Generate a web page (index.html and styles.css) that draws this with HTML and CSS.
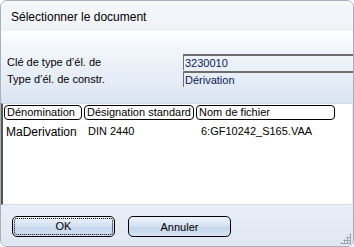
FILE: index.html
```html
<!DOCTYPE html>
<html lang="fr">
<head>
    <meta charset="UTF-8">
    <title>Sélectionner le document</title>
    <link rel="stylesheet" href="styles.css">
</head>
<body>
    <div class="window">
        <div class="title">Sélectionner le document</div>

        <div class="props">
            <div class="prop">
                <span class="label">Clé de type d’él. de</span>
                <span class="field">3230010</span>
            </div>
            <div class="prop">
                <span class="label">Type d’él. de constr.</span>
                <span class="field">Dérivation</span>
            </div>
        </div>

        <div class="list">
            <div class="head">
                <span class="col c1">Dénomination</span>
                <span class="col c2">Désignation standard</span>
                <span class="col c3">Nom de fichier</span>
            </div>
            <div class="row">
                <span class="c1">MaDerivation</span>
                <span class="c2">DIN 2440</span>
                <span class="c3">6:GF10242_S165.VAA</span>
            </div>
        </div>

        <div class="footer">
            <button class="btn ok"><span>OK</span></button>
            <button class="btn">Annuler</button>
            <div class="grip"></div>
        </div>
    </div>
</body>
</html>
```

FILE: styles.css
```css
body {
    margin: 0;
    background: #ffffff;
    font-family: 'Liberation Sans', Arial, sans-serif;
    font-size: 11px;
    color: #000;
}
.window {
    width: 352px;
    height: 245px;
    border: 1px solid #a7b0bb;
    border-radius: 7px;
    overflow: hidden;
    display: flex;
    flex-direction: column;
    background: #e4ebf5;
}
.title {
    height: 30px;
    line-height: 32px;
    padding-left: 10px;
    font-size: 12px;
    background: linear-gradient(#f6f8fb, #eef2f7);
    flex: none;
}
.props {
    height: 72px;
    flex: none;
    box-sizing: border-box;
    padding-top: 23px;
    background: linear-gradient(#ffffff 0%, #f4f7fb 20%, #dae5f3 100%);
}
.prop {
    display: flex;
    height: 16px;
    line-height: 16px;
    margin-bottom: 1px;
}
.label {
    width: 176px;
    padding-left: 6px;
    flex: none;
}
.field {
    flex: 1;
    border-top: 2px solid #6e6e6e;
    border-left: 1px solid #6e6e6e;
    padding-left: 1px;
    line-height: 15px;
    color: #0a1a5a;
}
.list {
    height: 102px;
    flex: none;
    box-sizing: border-box;
    background: #fff;
    border-top: 1px solid #d3dae3;
    border-left: 2px solid #555;
    border-bottom: 1px solid #d3dae3;
    margin-right: 1px;
}
.head {
    display: flex;
    padding: 1px 0 0 1px;
    gap: 2px;
}
.col {
    box-sizing: border-box;
    height: 15px;
    line-height: 13px;
    border: 1px solid #000;
    border-radius: 4px;
    padding-left: 2px;
    background: #fff;
}
.head .c1 { width: 78px; }
.head .c2 { width: 110px; }
.head .c3 { width: 139px; }
.row {
    display: flex;
    padding-top: 5px;
    font-size: 12px;
}
.row .c1 { width: 82px; padding-left: 3px; }
.row .c2 { width: 113px; font-size: 11px; }
.row .c3 { font-size: 11px; }
.footer {
    flex: 1;
    position: relative;
    display: flex;
    gap: 13px;
    padding: 11px 0 0 11px;
    background: linear-gradient(#e8eef7, #dfe7f2);
}
.btn {
    width: 103px;
    height: 21px;
    padding: 1px;
    border: 1px solid #000;
    border-radius: 5px;
    font-family: 'Liberation Sans', Arial, sans-serif;
    font-size: 11px;
    background: linear-gradient(#eef3fa, #d2e0f1 50%, #c3d5ec 51%, #d5e2f2);
}
.ok span {
    display: block;
    height: 100%;
    box-sizing: border-box;
    line-height: 15px;
    border: 1px dotted #000;
    border-radius: 3px;
}
.grip {
    position: absolute;
    right: 2px;
    bottom: 2px;
    width: 11px;
    height: 11px;
    background-image: radial-gradient(circle, #9aa4b0 1px, transparent 1.2px);
    background-size: 3px 3px;
    clip-path: polygon(100% 0, 100% 100%, 0 100%);
}
```
